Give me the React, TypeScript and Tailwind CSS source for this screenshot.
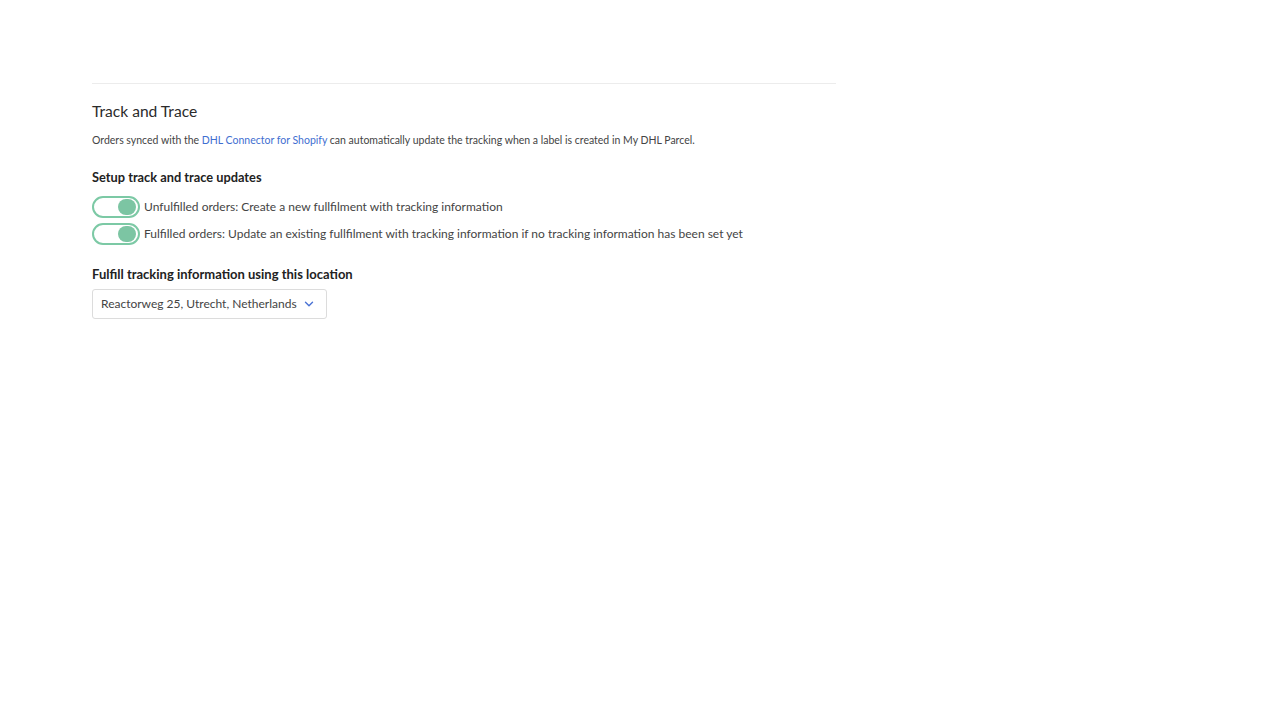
import React from "react";

function Toggle() {
  return (
    <div className="w-[48px] h-[22px] rounded-full border-2 border-[#7cc9a5] bg-white flex items-center justify-end pr-[2px] shrink-0">
      <div className="w-[18px] h-[16px] rounded-full bg-[#7cc5a3]" />
    </div>
  );
}

export default function App() {
  return (
    <div className="min-h-screen bg-white text-[#333] font-['Lato','Noto_Sans',sans-serif]">
      <div className="ml-[92px] w-[744px] pt-[83px]">
        <div className="border-t border-[#ececec]" />
        <h2 className="mt-[16px] text-[15.6px] leading-[22px] text-[#2b2b2b]">Track and Trace</h2>
        <p className="mt-[10px] text-[10.5px] leading-[16px] text-[#444]">
          Orders synced with the <span className="text-[#3f6fd1]">DHL Connector for Shopify</span> can automatically update the tracking when a label is created in My DHL Parcel.
        </p>
        <div className="mt-[20px] text-[12.8px] leading-[18px] font-bold text-[#222]">Setup track and trace updates</div>
        <div className="mt-[10px] flex flex-col gap-[5px]">
          <div className="flex items-center gap-[4px]">
            <Toggle />
            <span className="text-[12px] leading-[18px] text-[#444] whitespace-nowrap">Unfulfilled orders: Create a new fullfilment with tracking information</span>
          </div>
          <div className="flex items-center gap-[4px]">
            <Toggle />
            <span className="text-[12px] leading-[18px] text-[#444] whitespace-nowrap">Fulfilled orders: Update an existing fullfilment with tracking information if no tracking information has been set yet</span>
          </div>
        </div>
        <div className="mt-[20px] text-[13px] leading-[18px] font-bold text-[#222]">Fulfill tracking information using this location</div>
        <div className="mt-[6px] w-[235px] h-[30px] border border-[#dcdcdc] rounded-[3px] flex items-center pl-[8px] pr-[12px]">
          <span className="text-[12px] text-[#444] whitespace-nowrap">Reactorweg 25, Utrecht, Netherlands</span>
          <svg width="10" height="10" viewBox="0 0 10 10" className="ml-auto">
            <path d="M1.5 3.2 L5 6.7 L8.5 3.2" fill="none" stroke="#4a72d4" strokeWidth="1.4" strokeLinecap="round" strokeLinejoin="round" />
          </svg>
        </div>
      </div>
    </div>
  );
}
